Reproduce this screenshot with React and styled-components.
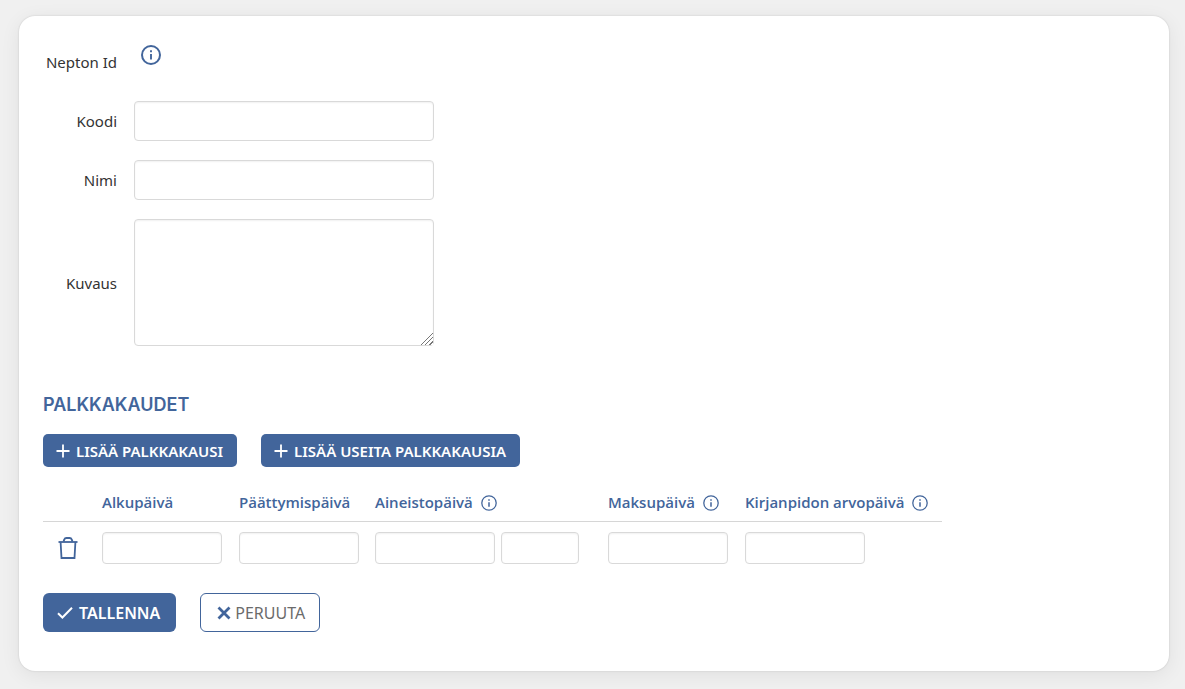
import React from 'react'

import styled, { createGlobalStyle, css } from 'styled-components'


const blue = '#42659b';

const GlobalStyle = createGlobalStyle`
    * {
        box-sizing: border-box;
    }
    body {
        margin: 0;
        background: #f0f0f0;
        color: #333;
        font-family: "Noto Sans", "Open Sans", sans-serif;
        font-size: 15px;
        line-height: 20px;
    }
`;

const Card = styled.main`
    margin: 16px 16px 18px 19px;
    padding: 26px 24px 39px;
    background: #fff;
    border-radius: 16px;
    box-shadow: 0 0 2px rgba(0, 0, 0, 0.16), 0 4px 20px rgba(0, 0, 0, 0.07);
`;

const Fields = styled.div`
    display: grid;
    grid-template-columns: 74px minmax(0, 300px);
    gap: 19px 17px;
    align-items: center;
`;

const Label = styled.label`
    text-align: right;
    white-space: nowrap;
`;

const IdValue = styled.div`
    height: 40px;
    padding: 3px 7px;
`;

const control = css`
    display: block;
    width: 100%;
    margin: 0;
    padding: 4px 8px;
    border: 1px solid #d9d9d9;
    border-radius: 4px;
    background: #fff;
    box-shadow: inset 0 1px 2px rgba(0, 0, 0, 0.06);
    color: inherit;
    font: inherit;
`;

const Input = styled.input`
    ${control}
    height: 40px;
`;

const TextArea = styled.textarea`
    ${control}
    height: 127px;
    resize: both;

    &::-webkit-resizer {
        background:
            linear-gradient(135deg, #fff 50%, transparent 50%),
            repeating-linear-gradient(315deg, #fff 0 2px, #777 2px 3px);
    }
`;

const SmallInput = styled.input`
    ${control}
    width: ${({ $short }) => ($short ? '78px' : '120px')};
    height: 32px;
`;

const Title = styled.h2`
    margin: 47px 0 17px;
    color: ${blue};
    font-family: Inter, "Noto Sans", sans-serif;
    font-size: 18px;
    font-weight: 600;
    line-height: 24px;
`;

const Actions = styled.div`
    display: flex;
    flex-wrap: wrap;
    gap: 24px;
`;

const Button = styled.button`
    display: inline-flex;
    align-items: center;
    gap: 6px;
    height: 33px;
    padding: 1px 14px 0 13px;
    border: 0;
    border-radius: 5px;
    background: ${blue};
    color: #fff;
    font: inherit;
    font-weight: 600;
    white-space: nowrap;
    cursor: pointer;
`;

const FormButton = styled(Button)`
    height: 39px;
    padding: 2px 16px 0 14px;
    border-radius: 6px;
    font-size: 16px;
`;

const CancelButton = styled(FormButton)`
    gap: 4px;
    padding: 2px 14px 0 16px;
    border: 1px solid ${blue};
    background: #fff;
    color: #6b6b6b;
    font-weight: 400;
`;

const Table = styled.table`
    width: 899px;
    max-width: 100%;
    margin: 16px 0 21px;
    border-collapse: collapse;
    table-layout: fixed;
`;

const Col = styled.col`
    width: ${({ $width }) => $width}px;
`;

const Th = styled.th`
    height: 38px;
    padding: 0 8px;
    border-bottom: 1px solid #d6d6d6;
    color: ${blue};
    font-family: "Open Sans", "Noto Sans", sans-serif;
    font-size: 15px;
    font-weight: 600;
    text-align: left;
    white-space: nowrap;
`;

const Td = styled.td`
    padding: 10px 8px 8px;
`;

const HeadLabel = styled.span`
    display: flex;
    align-items: flex-end;
    gap: 8px;
    line-height: 18px;
`;

const Inline = styled.div`
    display: flex;
    gap: 6px;
`;

const IconButton = styled.button`
    display: block;
    margin: 0 auto;
    padding: 0 2px 0 0;
    border: 0;
    background: none;
    color: ${blue};
    cursor: pointer;
`;

const Svg = styled.svg`
    display: block;
    flex: none;
`;

const InfoIcon = ({ size, stroke = 2 }) => (
  <Svg width={size} height={size} viewBox="0 0 20 20" fill="none" stroke={blue} aria-hidden="true">
    <circle cx="10" cy="10" r="9" strokeWidth={stroke} />
    <path d="M10 9v5.6" strokeWidth="1.9" />
    <path d="M10 5.2v2" strokeWidth="1.9" />
  </Svg>
)

const PlusIcon = () => (
  <Svg width="14" height="14" viewBox="0 0 14 14" stroke="currentColor" strokeWidth="1.8" aria-hidden="true">
    <path d="M7 0.5v13M0.5 7h13" />
  </Svg>
)

const CheckIcon = () => (
  <Svg width="16" height="14" viewBox="0 0 16 14" fill="none" stroke="currentColor" strokeWidth="2" aria-hidden="true">
    <path d="M1 7.2l4.4 4.3L15 1.8" />
  </Svg>
)

const CrossIcon = () => (
  <Svg width="14" height="14" viewBox="0 0 14 14" fill="none" stroke={blue} strokeWidth="2.8" aria-hidden="true">
    <path d="M1.5 1.5l11 11M12.5 1.5l-11 11" />
  </Svg>
)

const TrashIcon = () => (
  <Svg width="20" height="22" viewBox="0 0 20 22" fill="none" stroke="currentColor" strokeWidth="1.8" aria-hidden="true">
    <path d="M0.5 5h19" />
    <path d="M5.5 4.6L6.2 2.6Q6.8 1 8.4 1h3.2q1.6 0 2.2 1.6l0.7 2" />
    <path d="M2.6 5l0.9 16h13l0.9-16" />
  </Svg>
)

const columns = [
  { id: 'alku', label: 'Alkupäivä', width: 137 },
  { id: 'paattymis', label: 'Päättymispäivä', width: 136 },
  { id: 'aineisto', label: 'Aineistopäivä', width: 233, info: true, time: true },
  { id: 'maksu', label: 'Maksupäivä', width: 137, info: true },
  { id: 'arvo', label: 'Kirjanpidon arvopäivä', width: 205, info: true },
]

const App = () => {
  return (
    <>
      <GlobalStyle />
      <Card>
        <Fields>
          <Label as="span">Nepton Id</Label>
          <IdValue><InfoIcon size={20} /></IdValue>

          <Label htmlFor="koodi">Koodi</Label>
          <Input id="koodi" type="text" />

          <Label htmlFor="nimi">Nimi</Label>
          <Input id="nimi" type="text" />

          <Label htmlFor="kuvaus">Kuvaus</Label>
          <TextArea id="kuvaus" />
        </Fields>

        <Title>PALKKAKAUDET</Title>
        <Actions>
          <Button type="button"><PlusIcon /> LISÄÄ PALKKAKAUSI</Button>
          <Button type="button"><PlusIcon /> LISÄÄ USEITA PALKKAKAUSIA</Button>
        </Actions>

        <Table>
          <colgroup>
            <Col $width={51} />
            {columns.map((c) => <Col key={c.id} $width={c.width} />)}
          </colgroup>
          <thead>
            <tr>
              <Th />
              {columns.map((c) => (
                <Th key={c.id} id={c.id} scope="col">
                  <HeadLabel>{c.label} {c.info && <InfoIcon size={16} stroke={1.6} />}</HeadLabel>
                </Th>
              ))}
            </tr>
          </thead>
          <tbody>
            <tr>
              <Td>
                <IconButton type="button" aria-label="Poista"><TrashIcon /></IconButton>
              </Td>
              {columns.map((c) => (
                <Td key={c.id}>
                  <Inline>
                    <SmallInput type="text" aria-labelledby={c.id} />
                    {c.time && <SmallInput $short type="text" aria-labelledby={c.id} />}
                  </Inline>
                </Td>
              ))}
            </tr>
          </tbody>
        </Table>

        <Actions>
          <FormButton type="submit"><CheckIcon /> TALLENNA</FormButton>
          <CancelButton type="button"><CrossIcon /> PERUUTA</CancelButton>
        </Actions>
      </Card>
    </>
  )
}

export default App
